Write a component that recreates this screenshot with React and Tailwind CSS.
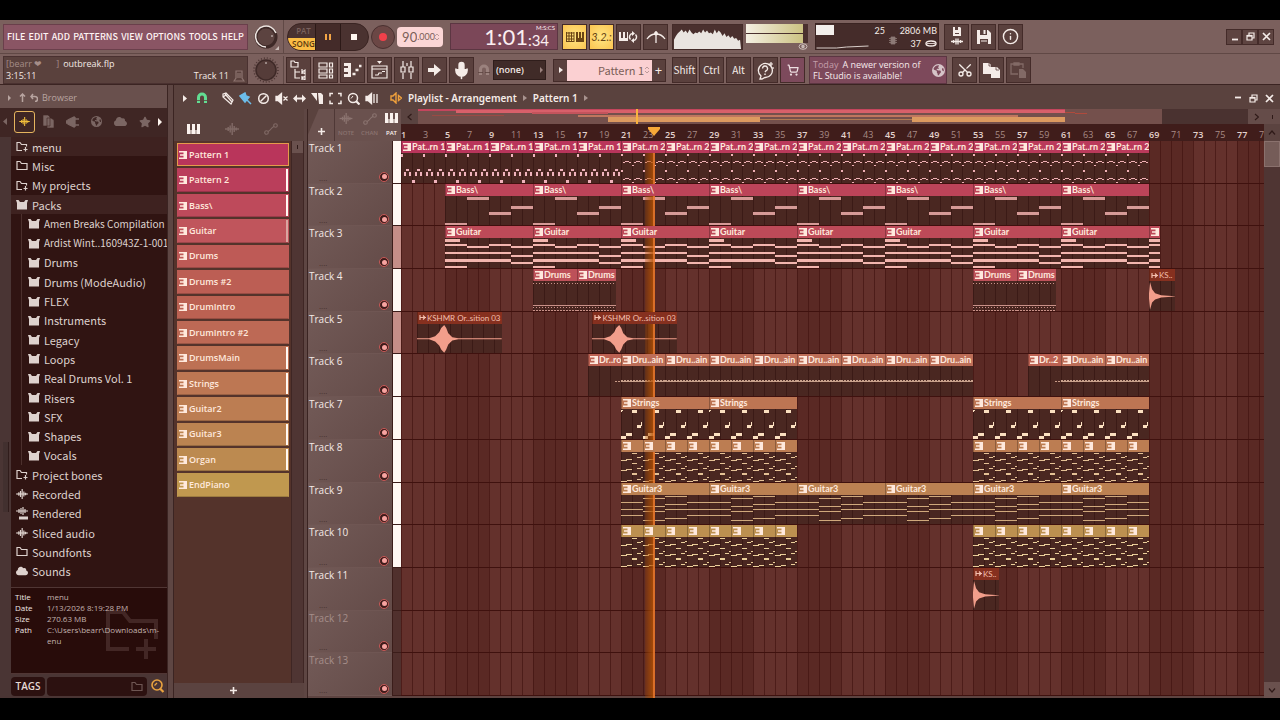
import { useState } from "react";
import clsx from "clsx";
import { Scissors, Info, ShoppingCart, Mic } from "lucide-react";
import { FaEarthAmericas, FaCloud, FaStar } from "react-icons/fa6";

const BAR = 11;
const HEADER = 93;
const PLAYHEAD = 22.9;

const menus = ["FILE", "EDIT", "ADD", "PATTERNS", "VIEW", "OPTIONS", "TOOLS", "HELP"];

const patterns = [
  { name: "Pattern 1", bg: "bg-[#b9355b]" },
  { name: "Pattern 2", bg: "bg-[#ba3e5b]", on: true },
  { name: "Bass\\", bg: "bg-[#be4a5b]", on: true },
  { name: "Guitar", bg: "bg-[#c0555c]", half: true },
  { name: "Drums", bg: "bg-[#be5a56]" },
  { name: "Drums #2", bg: "bg-[#bc5e54]" },
  { name: "DrumIntro", bg: "bg-[#bb6152]" },
  { name: "DrumIntro #2", bg: "bg-[#bd6955]" },
  { name: "DrumsMain", bg: "bg-[#bd7154]", on: true },
  { name: "Strings", bg: "bg-[#bd7753]", on: true },
  { name: "Guitar2", bg: "bg-[#bc7d52]", on: true },
  { name: "Guitar3", bg: "bg-[#bb8351]", on: true },
  { name: "Organ", bg: "bg-[#bc8a50]", on: true },
  { name: "EndPiano", bg: "bg-[#c0984f]" },
];

const browserItems = [
  { name: "menu", icon: "folderPlus", lit: true },
  { name: "Misc", icon: "folder" },
  { name: "My projects", icon: "folderPlus" },
  { name: "Packs", icon: "pack", lit: true },
  { name: "Amen Breaks Compilation", icon: "pack", child: true, long: true },
  { name: "Ardist Wint..160943Z-1-001", icon: "pack", child: true, long: true },
  { name: "Drums", icon: "pack", child: true },
  { name: "Drums (ModeAudio)", icon: "pack", child: true },
  { name: "FLEX", icon: "pack", child: true },
  { name: "Instruments", icon: "pack", child: true },
  { name: "Legacy", icon: "pack", child: true },
  { name: "Loops", icon: "pack", child: true },
  { name: "Real Drums Vol. 1", icon: "pack", child: true },
  { name: "Risers", icon: "pack", child: true },
  { name: "SFX", icon: "pack", child: true },
  { name: "Shapes", icon: "pack", child: true },
  { name: "Vocals", icon: "pack", child: true },
  { name: "Project bones", icon: "folderPlus" },
  { name: "Recorded", icon: "wave" },
  { name: "Rendered", icon: "waveBar" },
  { name: "Sliced audio", icon: "wave" },
  { name: "Soundfonts", icon: "folder" },
  { name: "Sounds", icon: "cloud" },
];

// Note shapes are [x, y, width, height] in a clip body that is 29 units high
const repeat = (notes, step, times) =>
  Array.from({ length: times }, (_, i) => notes.map(([x, y, w, h]) => [x + i * step, y, w, h])).flat();

const chordShort = [
  [0, 8, 6, 1], [5, 7, 6, 1], [11, 1, 5, 1], [16, 5, 4, 1], [20, 4, 2, 1],
  [0, 18, 6, 1], [5, 17, 6, 1], [11, 11, 5, 1], [16, 16, 4, 1], [20, 14, 2, 1],
  [0, 28, 6, 1], [6, 27, 5, 1], [11, 21, 5, 1], [16, 26, 4, 1], [20, 24, 2, 1],
];

const seg = (x, ys) => ys.map((y) => [x, y, 22, 1]);

const kinds = {
  p1: {
    head: "bg-[#b9355b]",
    fill: "#f0b3bc",
    notes: [
      ...repeat([[0, 1, 2, 3], [11, 26, 3, 3]], 22, 2),
      ...repeat([[3, 19, 2, 3], [5, 16, 3, 2], [8, 19, 2, 3]], 11, 4),
    ],
  },
  p2: {
    head: "bg-[#ba3a5b]",
    fill: "#efb0b4",
    notes: [
      ...repeat([[0, 1, 2, 2], [11, 12, 2, 1], [0, 17, 2, 2], [11, 28, 2, 1]], 22, 2),
      ...repeat([[2, 9, 2, 1], [4, 8, 4, 1], [8, 9, 2, 1], [2, 25, 2, 1], [4, 24, 4, 1], [8, 25, 2, 1]], 11, 4),
    ],
  },
  bass: {
    head: "bg-[#bc4459]",
    fill: "#d69a97",
    notes: [[0, 26, 22, 3], [22, 1, 22, 3], [44, 16, 22, 3], [66, 10, 22, 3]],
  },
  guitar: {
    head: "bg-[#bd4a58]",
    fill: "#f2b5ae",
    notes: [
      [0, 1, 15, 3], [0, 6, 22, 2], [22, 8, 22, 2], [44, 6, 22, 2], [66, 8, 22, 2],
      [0, 14, 66, 2], [66, 17, 22, 2], [0, 21, 66, 2], [66, 23, 22, 2], [0, 27, 22, 2],
    ],
  },
  drums: {
    head: "bg-[#bd5159]",
    fill: "#c99088",
    notes: [...repeat([[0, 2, 1, 1], [0, 25, 1, 1], [0, 28, 2, 1]], 3, 15), [0, 23, 44, 1]],
  },
  intro: { head: "bg-[#bb6152]", fill: "#c79a86", notes: repeat([[27, 15, 2, 1]], 3, 2) },
  main: { head: "bg-[#bd6e58]", fill: "#c9a18c", notes: [...repeat([[0, 14, 2, 1]], 3, 15), [0, 15, 44, 1]] },
  strings: {
    head: "bg-[#bd7553]",
    fill: "#fbe0c0",
    notes: [
      ...repeat([[0, 26, 5, 3], [5, 23, 6, 3], [11, 1, 5, 3], [16, 16, 4, 3], [20, 13, 1, 4]], 22, 4),
      [0, 1, 2, 1], [0, 2, 1, 1],
    ],
  },
  guitar2: { head: "bg-[#bc7d52]", fill: "#e5c296", notes: chordShort },
  guitar3: {
    head: "bg-[#bb8152]",
    fill: "#d0a97c",
    notes: [...seg(0, [7, 14, 20, 28]), ...seg(22, [3, 11, 16, 24]), ...seg(44, [1, 9, 14, 22]), ...seg(66, [7, 14, 20, 28])],
  },
  organ: { head: "bg-[#bc9050]", fill: "#ebcf9a", notes: chordShort },
};

const run = (kind, label, from, to, step) => {
  const out = [];
  for (let at = from; at < to; at += step) out.push({ kind, label, at, len: step });
  return out;
};

const tracks = [
  { strip: "bg-[#fff8f3]", clips: [...run("p1", "Pat..rn 1", 0, 20, 4), ...run("p2", "Pat..rn 2", 20, 68, 4)] },
  { strip: "bg-[#fff8f3]", clips: run("bass", "Bass\\", 4, 68, 8) },
  { strip: "bg-[#c58e88]", clips: [...run("guitar", "Guitar", 4, 68, 8), { kind: "guitar", label: "", at: 68, len: 1 }] },
  {
    strip: "bg-[#fff8f3]",
    clips: [
      { kind: "drums", label: "Drums", at: 12, len: 4 },
      { kind: "drums", label: "Drums", at: 16, len: 3.5 },
      { kind: "drums", label: "Drums", at: 52, len: 4 },
      { kind: "drums", label: "Drums", at: 56, len: 3.5 },
      { audio: "hit", label: "KS..", at: 68, len: 2.4 },
    ],
  },
  {
    strip: "bg-[#c58e88]",
    clips: [
      { audio: "swell", label: "KSHMR Or..sition 03", at: 1.45, len: 7.7 },
      { audio: "swell", label: "KSHMR Or..sition 03", at: 17.4, len: 7.7 },
    ],
  },
  {
    strip: "bg-[#fff8f3]",
    clips: [
      { kind: "intro", label: "Dr..ro", at: 17, len: 3 },
      ...run("main", "Dru..ain", 20, 52, 4),
      { kind: "intro", label: "Dr..2", at: 57, len: 3 },
      ...run("main", "Dru..ain", 60, 68, 4),
    ],
  },
  { strip: "bg-[#fff8f3]", clips: [...run("strings", "Strings", 20, 36, 8), ...run("strings", "Strings", 52, 68, 8)] },
  { strip: "bg-[#fff8f3]", clips: [...run("guitar2", "", 20, 36, 2), ...run("guitar2", "", 52, 68, 2)] },
  { strip: "bg-[#fff8f3]", clips: run("guitar3", "Guitar3", 20, 68, 8) },
  { strip: "bg-[#fff8f3]", clips: [...run("organ", "", 20, 36, 2), ...run("organ", "", 52, 68, 2)] },
  { strip: "bg-[#50302d]", clips: [{ audio: "hit", label: "KS..", at: 52, len: 2.4 }] },
  { strip: "bg-[#50302d]", clips: [], dim: true },
  { strip: "bg-[#50302d]", clips: [], dim: true },
];

/* ---------- icons ---------- */

function Ico({ w = 16, h = 16, vb, className, children }) {
  return (
    <svg width={w} height={h} viewBox={vb || `0 0 ${w} ${h}`} fill="none" stroke="currentColor" strokeWidth="1.5" className={clsx("shrink-0", className)} aria-hidden="true">
      {children}
    </svg>
  );
}

const PatternGlyph = ({ className }) => (
  <Ico w={8} h={8} className={className}>
    <path d="M0 0h8v8H0V6.500h4.500V4.700H1V3.300h3.500V1.500H0z" fill="currentColor" stroke="none" />
  </Ico>
);

const WaveIcon = ({ w = 14, h = 12 }) => (
  <Ico w={w} h={h} vb="0 0 14 12">
    <path d="M0 6h14" strokeWidth="1.4" />
    <path d="M3.2 4v4M5.2 2.5v7M7.2 0v12M9.2 3v6M11.2 4.5v3" strokeWidth="1.4" />
  </Ico>
);

const PianoIcon = ({ w = 13, h = 10 }) => (
  <Ico w={w} h={h} vb="0 0 13 10">
    <path d="M0 0h3v6h2V0h3v6h2V0h3v10H0z" fill="currentColor" stroke="none" />
    <path d="M4 6v4M9 6v4" stroke="#5a423e" strokeWidth="0.7" />
  </Ico>
);

const AutoIcon = () => (
  <Ico w={14} h={12}>
    <circle cx="2.5" cy="9.5" r="1.8" strokeWidth="1.1" />
    <circle cx="11.5" cy="2.5" r="1.8" strokeWidth="1.1" />
    <path d="M4 8.5C7 7.500 7 4.500 10 3.500" strokeWidth="1.1" />
  </Ico>
);

const FolderIcon = ({ plus }) => (
  <Ico w={12} h={11}>
    <path d={plus ? "M6 9.500H1V1.500h3l1.500 2H10.500V5.500" : "M1 9.500V1.500h3l1.500 2H11v6z"} strokeWidth="1.2" />
    {plus && <path d="M9.500 6v4.500M7.500 8.500h4" strokeWidth="1.2" />}
  </Ico>
);

const PackIcon = () => (
  <Ico w={12} h={11}>
    <path d="M0 1h2.500L4 3h4l1.500-2H12l-1 3v6.500H1V4z" fill="currentColor" stroke="none" />
  </Ico>
);

const browserIcons = {
  folder: <FolderIcon />,
  folderPlus: <FolderIcon plus />,
  pack: <PackIcon />,
  wave: <WaveIcon w={12} h={10} />,
  waveBar: (
    <Ico w={12} h={13}>
      <path d="M0 4h12M3 2v4M5 1v6M7 0v8M9 2v4" strokeWidth="1.2" />
      <path d="M3 9.500h9v3H3z" fill="currentColor" stroke="none" />
    </Ico>
  ),
  cloud: <FaCloud size={12} className="shrink-0" />,
};

const MagnetIcon = ({ w = 12, h = 12 }) => (
  <Ico w={w} h={h} vb="0 0 12 12">
    <path d="M2.500 11V5.500a3.500 3.500 0 0 1 7 0V11" strokeWidth="3" />
    <path d="M0 8.500h5M7 8.500h5" stroke="#5a423e" strokeWidth="0.8" />
  </Ico>
);

const RestoreIcon = () => (
  <Ico w={9} h={9}>
    <path d="M1 3.500h5v4.500H1zM3 3V1h5v5H6.500" strokeWidth="1.2" />
    <path d="M1 3.800h5" strokeWidth="1.8" />
  </Ico>
);

const CloseIcon = () => (
  <Ico w={9} h={9}>
    <path d="M1 1l7 7M8 1L1 8" strokeWidth="1.7" />
  </Ico>
);

const SaveShape = () => (
  <>
    <path d="M1 1h11l3 3v11H1z" fill="currentColor" stroke="none" />
    <path d="M4 1h7v5H4zM4 10h8v5H4z" fill="#5a403d" stroke="none" />
    <path d="M7.500 1h2v4h-2zM5 11.500h6v1H5z" fill="currentColor" stroke="none" />
  </>
);

/* ---------- toolbar ---------- */

function Btn({ label, className, children }) {
  return (
    <button
      type="button"
      aria-label={label}
      className={clsx(
        "flex h-[26px] w-[25px] shrink-0 items-center justify-center border border-[#442b29]",
        className || "bg-[#5a403d] text-[#f5ece8]"
      )}
    >
      {children}
    </button>
  );
}

function WindowButtons({ boxed }) {
  const cls = boxed
    ? "flex h-4 w-4 items-center justify-center border border-[#442b29] bg-[#5e4441]"
    : "flex h-4 w-4 items-center justify-center";
  return (
    <div className="ml-auto flex shrink-0 text-[#f5ece8]">
      <button type="button" aria-label="Minimize" className={cls}>
        <Ico w={7} h={9}><path d={boxed ? "M1 7.500h6" : "M1 3.500h6"} strokeWidth="1.8" /></Ico>
      </button>
      <button type="button" aria-label="Restore" className={cls}><RestoreIcon /></button>
      <button type="button" aria-label="Close" className={cls}><CloseIcon /></button>
    </div>
  );
}

function Knob({ ring }) {
  return (
    <div className="flex h-full w-9 shrink-0 items-center justify-center border-r border-[#604845]">
      <Ico w={28} h={28}>
        {ring ? (
          <>
            <circle cx="14" cy="14" r="10" fill="#5c4340" stroke="#3e2927" strokeWidth="3" />
            <path d="M14 24A10.500 10.500 0 1 1 24 10" stroke="#efe6e2" strokeWidth="1.500" />
            <circle cx="20" cy="13" r="0.800" fill="#efe6e2" stroke="none" />
            <path d="M27 23v4h-4z" fill="#c9bab6" stroke="none" />
          </>
        ) : (
          <>
            <circle cx="14" cy="14" r="12" stroke="#4a3331" strokeWidth="1.500" strokeDasharray="1 2" />
            <circle cx="14" cy="14" r="10" fill="#553c39" stroke="#3e2927" strokeWidth="1.500" />
            <circle cx="14" cy="7" r="0.800" fill="#efe6e2" stroke="none" />
          </>
        )}
      </Ico>
    </div>
  );
}

function Transport() {
  return (
    <div className="flex h-[28px] w-[82px] shrink-0 overflow-hidden rounded-full border border-[#3a2422] bg-[#4a3230]">
      <div className="flex w-[27px] flex-col text-center font-['Open_Sans',sans-serif] text-[8px] font-semibold leading-[12px]">
        <button type="button" className="h-[14px] pl-1 text-[#7b625e]">PAT</button>
        <button type="button" className="h-[12px] bg-[#fbbd45] pl-1 text-[#5a3a10]">SONG</button>
      </div>
      <button type="button" aria-label="Pause" className="flex w-[26px] items-center justify-center border-x border-[#2c1917] bg-[#442b29] text-[#f3a546]">
        <Ico w={8} h={8}><path d="M2 1v6M6 1v6" strokeWidth="2" /></Ico>
      </button>
      <button type="button" aria-label="Stop" className="flex w-[26px] items-center justify-center">
        <span className="h-[6px] w-[6px] bg-[#fff6f0]" />
      </button>
    </div>
  );
}

function Scope() {
  const pts = [16, 12, 9, 7, 5, 8, 6, 9, 5, 8, 10, 8, 9, 7, 9, 5, 8, 6, 9, 8, 10, 5, 9, 6, 8, 12, 9, 13, 11, 14, 12, 15, 14, 17, 16];
  const line = pts.map((y, i) => `${i * 2 + 1},${y}`).join(" ");
  return (
    <svg viewBox="0 0 71 26" preserveAspectRatio="none" className="h-[26px] w-[71px] shrink-0 border border-[#442b29] bg-[#4a302e]" aria-hidden="true">
      <polygon points={`1,26 ${line} 70,26`} fill="#e9e4e0" />
    </svg>
  );
}

function ToolbarTop() {
  return (
    <div className="flex h-[34px] items-center border-b border-[#604845] pl-[3px] pr-[6px]">
      <nav className="flex h-[26px] w-[245px] shrink-0 items-center justify-between border border-[#6a3f4b] bg-[#8a5564] px-[3px] font-['Noto_Sans_CJK_JP',sans-serif] text-[9px] font-medium leading-4 text-[#fff4f4]">
        {menus.map((m) => (
          <button type="button" key={m}>{m}</button>
        ))}
      </nav>
      <Knob ring />
      <div className="flex min-w-0 flex-1 items-center pl-[3px]">
        <Transport />
        <button type="button" aria-label="Record" className="ml-[2px] flex h-6 w-6 shrink-0 items-center justify-center rounded-full border border-[#4a3130] bg-[#6b4745]">
          <span className="h-2 w-2 rounded-full bg-[#f0404a]" />
        </button>
        <label className="ml-[2px] flex h-5 w-[46px] shrink-0 items-center rounded-sm bg-[#fbd6d6] pr-1 font-['Lato',sans-serif] text-[#7c5e58]">
          <input aria-label="Tempo" defaultValue="90" className="h-4 min-w-0 flex-1 bg-transparent text-right text-[13px] leading-4" />
          <span className="text-[9px] leading-4">.000</span>
          <Ico w={4} h={10} className="text-[#b99]"><path d="M0 4l2-2 2 2M0 6l2 2 2-2" strokeWidth="1" /></Ico>
        </label>
        <div className="ml-[7px] flex h-[27px] w-[108px] shrink-0 items-center justify-end border border-[#5c3642] bg-[#7b4758] pr-[2px] font-['Lato',sans-serif] text-[#fbeef0]">
          <span className="text-[22px] leading-6">1:01</span>
          <div className="flex flex-col">
            <span className="pl-2 text-[6px] leading-[7px]">M:S:CS</span>
            <span className="text-[15px] leading-[18px]">:34</span>
          </div>
        </div>
        <div className="ml-1 flex gap-[2px]">
          <Btn label="Typing keyboard" className="bg-[radial-gradient(#ffe684,#fbc450)] text-[#6a4414]">
            <Ico w={20} h={12}>
              <path d="M1 2h8M1 5h8M1 8h8M1 10.500h8M1.500 1v10M4 1v10M6.500 1v10M9 1v10" strokeWidth="1" />
              <path d="M11 1h2v6h1V1h2v6h1V1h2v10h-8z" fill="currentColor" stroke="none" />
            </Ico>
          </Btn>
          <Btn label="Countdown" className="bg-[radial-gradient(#ffe684,#fbc450)] text-[#6a4414]">
            <span className="font-['Lato',sans-serif] text-[11px] italic leading-3">3.2.:</span>
          </Btn>
          <Btn label="Loop record">
            <Ico w={19} h={12}>
              <path d="M0 1h2v6h2V1h2v6h2V1h1v9H0z" fill="currentColor" stroke="none" />
              <path d="M11.500 8.500A3.500 3.500 0 0 1 13.500 2.500M16.500 3.500A3.500 3.500 0 0 1 14.500 9.500" strokeWidth="1.500" />
              <path d="M13 0l3 2.500-3 2.500zM15 7v5l-3-2.500z" fill="currentColor" stroke="none" />
            </Ico>
          </Btn>
          <Btn label="Metronome">
            <Ico w={20} h={14}>
              <path d="M1 9C3 6 6 4 10 4s7 2 9 5M10 1v12" strokeWidth="1.300" />
              <circle cx="10" cy="3.500" r="2" fill="currentColor" stroke="none" />
            </Ico>
          </Btn>
        </div>
        <div className="ml-1 flex shrink-0 gap-[3px]">
          <Scope />
          <div className="flex w-[62px] flex-col">
            <div className="flex h-[19px] flex-col gap-px bg-[#4a302e] pr-[5px]">
              <span className="flex-1 bg-[linear-gradient(90deg,#f4efe2,#ccc282)]" />
              <span className="flex-1 bg-[linear-gradient(90deg,#f4efe2,#ccc282)]" />
            </div>
            <Ico w={10} h={7} className="ml-auto text-[#cbbdb9]"><ellipse cx="5" cy="3.500" rx="4" ry="2.800" strokeWidth="1" /><circle cx="5" cy="3.500" r="1" /></Ico>
          </div>
        </div>
        <div className="ml-[7px] flex h-[27px] w-[124px] shrink-0 border border-[#3b2422] bg-[#452c2a] font-['Lato',sans-serif] text-[9px] leading-[13px] text-[#f5ece8]">
          <div className="flex w-[53px] flex-col justify-between">
            <span className="mt-px h-[10px] w-[18px] bg-[#f3efec]" />
            <svg viewBox="0 0 52 5" className="h-[5px] w-full" aria-hidden="true"><path d="M0 4h20l10-1 22-1" stroke="#d8cdc9" fill="none" /></svg>
          </div>
          <div className="flex w-[16px] justify-end">25</div>
          <Ico w={8} h={9} className="ml-1 mt-3 text-[#8d7a76]"><path d="M2 1h4v7H2zM0 2.500h8M0 4.500h8M0 6.500h8" fill="currentColor" strokeWidth="0.800" /></Ico>
          <div className="flex flex-1 flex-col items-end whitespace-nowrap pr-px">
            <span>2806 MB</span>
            <span className="flex items-center gap-1">37 <Ico w={12} h={7}><ellipse cx="6" cy="3.500" rx="5" ry="2.500" strokeWidth="1.400" /><path d="M2 3.500h8" strokeWidth="0.800" /></Ico></span>
          </div>
        </div>
        <div className="ml-[5px] flex gap-[2px]">
          <Btn label="Save new version">
            <Ico w={12} h={19}>
              <path d="M2 0h7l1 1v8H2z" fill="currentColor" stroke="none" />
              <path d="M4 0h3v3H4zM4 6h4v1H4z" fill="#5a403d" stroke="none" />
              <path d="M0 14.500h12M2.500 13v3M5 11.500v6M7 11.500v6M9.500 13v3" strokeWidth="1.300" />
            </Ico>
          </Btn>
          <Btn label="Save"><Ico w={16} h={16}><SaveShape /></Ico></Btn>
          <Btn label="Info"><Info size={17} /></Btn>
        </div>
        <WindowButtons boxed />
      </div>
    </div>
  );
}

function ToolbarBottom() {
  return (
    <div className="flex h-[30px] items-center pl-[3px] pr-[6px] pt-[2px]">
      <div className="flex h-[28px] w-[245px] shrink-0 flex-col justify-center border border-[#4a3130] bg-[#5a413d] px-[2px] font-['Open_Sans',sans-serif] text-[9px] leading-3 text-[#f3e9e5]">
        <div className="flex gap-1">
          <span className="whitespace-pre text-[#a58d88]">[bearr ❤      ]</span>
          <span>outbreak.flp</span>
        </div>
        <div className="flex items-center">
          <span>3:15:11</span>
          <span className="ml-auto">Track 11</span>
          <Ico w={12} h={12} className="ml-1 text-[#8d7470]"><path d="M3 1h6v7l2 3H1l2-3zM5 3v5M7 3v5" strokeWidth="1.200" /></Ico>
        </div>
      </div>
      <Knob />
      <div className="flex min-w-0 flex-1 items-center pl-[2px]">
        <div className="flex gap-[2px]">
          <Btn label="Browser">
            <Ico w={18} h={20}>
              <path d="M1 7V1h3l1 1.500h3V7z" strokeWidth="1.200" />
              <path d="M5 9v9h5M5 12h5M12 9v5M12 16v4M12 12l3-2v4zM12 18l3-2v4z" strokeWidth="1.200" />
            </Ico>
          </Btn>
          <Btn label="Channel rack">
            <Ico w={16} h={17}><path d="M1 1h8v4H1zM1 7h8v4H1zM1 13h8v3H1zM11.500 1h3v4h-3zM11.500 7h3v4h-3zM11.500 13h3v3h-3z" strokeWidth="1.200" /></Ico>
          </Btn>
          <Btn label="Piano roll">
            <Ico w={19} h={14}>
              <path d="M1 0h7v14H1v-3h4V9H1V5h4V3H1z" fill="currentColor" stroke="none" />
              <path d="M9.500 11h3M12.500 7h3M16 3h2.500" strokeWidth="2.400" />
            </Ico>
          </Btn>
          <Btn label="Playlist">
            <Ico w={17} h={18}>
              <path d="M6 0h5L8.500 3z" fill="currentColor" stroke="none" />
              <path d="M1 5h15v12H1zM1 8h15M4 14h3l1-2h3M11 10.500h3" strokeWidth="1.200" />
            </Ico>
          </Btn>
          <Btn label="Mixer">
            <Ico w={14} h={18}><path d="M3 0v6M3 12v6M11 0v6M11 12v6M1 6h4v5H1zM9 6h4v5H9zM7 2v3" strokeWidth="1.200" /></Ico>
          </Btn>
        </div>
        <div className="ml-[3px] flex gap-[2px]">
          <Btn label="Step"><Ico w={13} h={12}><path d="M0 4h6V0l7 6-7 6V8H0z" fill="currentColor" stroke="none" /></Ico></Btn>
          <Btn label="Tempo tapper"><Mic size={19} fill="currentColor" strokeWidth={2} /></Btn>
        </div>
        <span className="ml-1 text-[#9b827e]"><MagnetIcon /></span>
        <div className="ml-[3px] flex h-5 w-[53px] shrink-0 items-center border border-[#2f1d1b] bg-[#402b28] pr-[2px] text-[#f3e9e5]">
          <select aria-label="Snap" className="min-w-0 flex-1 appearance-none bg-transparent pl-[2px] font-['Open_Sans',sans-serif] text-[9px] font-semibold">
            <option>(none)</option>
          </select>
          <Ico w={3} h={6} className="text-[#9b827e]"><path d="M0 0l3 3-3 3z" fill="currentColor" stroke="none" /></Ico>
        </div>
        <div className="ml-[7px] flex h-[23px] w-[113px] shrink-0 border border-[#442b29] bg-[#5a403d] text-[#f5ece8]">
          <button type="button" aria-label="Pattern menu" className="flex w-[13px] items-center justify-center"><Ico w={4} h={6}><path d="M0 0l4 3-4 3z" fill="currentColor" stroke="none" /></Ico></button>
          <input aria-label="Pattern" defaultValue="Pattern 1" className="h-full w-[77px] min-w-0 bg-[#fbd0d2] text-right font-['Noto_Sans_CJK_JP',sans-serif] text-[11px] leading-4 text-[#7c5e58]" />
          <span className="flex w-2 items-center bg-[#fbd0d2] text-[#b99]"><Ico w={6} h={10}><path d="M1 4l2-2 2 2M1 6l2 2 2-2" strokeWidth="1" /></Ico></span>
          <button type="button" className="flex flex-1 items-center justify-center text-[13px] leading-4">+</button>
        </div>
        <div className="ml-[6px] flex gap-[2px] font-['Noto_Sans_CJK_JP',sans-serif] text-[10px] leading-4">
          <Btn>Shift</Btn>
          <Btn>Ctrl</Btn>
          <Btn>Alt</Btn>
          <Btn label="Help">
            <Ico w={19} h={19}>
              <path d="M4 18l1-3A7 7 0 1 1 9 16.500L6 18z" strokeWidth="1.300" />
              <path d="M6.500 7.500a2.500 2.500 0 1 1 3.500 2.300L9 11M9 12.500v1.500" strokeWidth="1.400" />
              <path d="M15 1v4M13 3h4M17 6v2" strokeWidth="1.200" />
            </Ico>
          </Btn>
          <Btn label="Shop" className="bg-[#7d4a5c] text-[#eedfe2]"><ShoppingCart size={12} strokeWidth={2.5} /></Btn>
        </div>
        <div className="ml-1 flex h-[28px] w-[138px] shrink-0 items-center border border-[#5c3642] bg-[#7d495b] pl-[3px] pr-px font-['Open_Sans',sans-serif] text-[9px] leading-[11px] text-[#f7e9ec]">
          <p className="flex-1"><span className="mr-1 text-[#c39ea9]">Today</span>A newer version of<br />FL Studio is available!</p>
          <FaEarthAmericas size={13} className="shrink-0 text-[#d6c4c8]" />
        </div>
        <div className="ml-[5px] flex gap-[2px]">
          <Btn label="Cut"><Scissors size={16} className="-rotate-90" /></Btn>
          <Btn label="Copy">
            <Ico w={17} h={15}><path d="M0 0h6l2 2v9H0zM8 4h6l3 3v8H8z" fill="currentColor" stroke="none" /><path d="M6 0v3h3M13 4v3h3" stroke="#5a403d" strokeWidth="0.800" /></Ico>
          </Btn>
          <Btn label="Paste" className="bg-[#5a403d] text-[#826a66]">
            <Ico w={17} h={16}><path d="M8 12H1V2h12v4M4 1h5v2H4z" strokeWidth="1.300" /><path d="M9 7h4l3 3v6H9z" fill="currentColor" stroke="none" /></Ico>
          </Btn>
        </div>
      </div>
    </div>
  );
}

/* ---------- browser ---------- */

function Browser() {
  return (
    <aside className="flex w-[167px] shrink-0 flex-col bg-[#4a3534]">
      <div className="flex h-[23px] shrink-0 items-center gap-2 bg-[#69504d] pl-2 pt-[2px] font-['Open_Sans',sans-serif] text-[9px] text-[#b8a4a0]">
        <Ico w={3} h={6}><path d="M0 0l3 3-3 3z" fill="currentColor" stroke="none" /></Ico>
        <Ico w={7} h={9}><path d="M3.500 9V1M1 3.500L3.500 1 6 3.500" /></Ico>
        <Ico w={8} h={9} className="-ml-1"><path d="M3 1L1 3.500 3 6M1 3.500h4a2 2 0 0 1 0 5" /></Ico>
        <span className="-ml-1">Browser</span>
      </div>
      <div className="flex h-[29px] shrink-0 items-center bg-[#3f2624] pb-[2px] text-[#7b6663]">
        <Ico w={12} h={7}><path d="M7 0v7L3 3.500z" fill="currentColor" stroke="none" /></Ico>
        <button type="button" aria-label="Audio" className="ml-[2px] flex h-[22px] w-[21px] items-center justify-center rounded-[3px] border border-[#e5b45e] text-[#f2bf3c]"><WaveIcon w={13} h={9} /></button>
        <div className="flex flex-1 items-center justify-between pl-2 pr-[6px]">
          <button type="button" aria-label="Files"><Ico w={11} h={13}><path d="M0 0h5l2 2v9H0z M4 3h4l3 2v8H4z" fill="currentColor" stroke="#3f2624" strokeWidth="0.600" /></Ico></button>
          <button type="button" aria-label="Plugins"><Ico w={13} h={12}><path d="M0 5h2V4l6-3v10L2 8V7H0zM9 3h4M9 9h4M9 1v10" fill="currentColor" strokeWidth="1.300" /></Ico></button>
          <button type="button" aria-label="Online"><FaEarthAmericas size={11} /></button>
          <button type="button" aria-label="Cloud"><FaCloud size={13} /></button>
          <button type="button" aria-label="Favourites"><FaStar size={12} /></button>
        </div>
        <Ico w={8} h={8} className="mr-[2px] text-[#fff6f0]"><path d="M1 0l4 4-4 4z" fill="currentColor" stroke="none" /></Ico>
      </div>
      <div className="flex min-h-0 flex-1">
        <div className="flex w-[11px] shrink-0 flex-col items-center">
          <div className="flex-1" />
          <div className="mb-[186px] h-[70px] w-[6px] border-r border-[#301c1b] bg-[#42302f]" />
        </div>
        <div className="flex min-w-0 flex-1 flex-col">
          <ul className="flex min-h-0 flex-1 flex-col overflow-hidden bg-[#301412] pb-[6px]">
            {browserItems.map((it) => (
              <li key={it.name} className={clsx("flex min-h-0 flex-1", it.lit && "bg-[#3e2220]")}>
                <button
                  type="button"
                  className={clsx(
                    "flex min-w-0 flex-1 items-center gap-1 whitespace-nowrap font-['Noto_Sans_CJK_JP',sans-serif] leading-4 text-[#ded2ce]",
                    it.long ? "text-[10px]" : "text-[11px]",
                    it.child ? "ml-[10px] border-l border-[#4c302d] pl-[6px]" : "pl-[5px]"
                  )}
                >
                  {browserIcons[it.icon]}
                  <span>{it.name}</span>
                </button>
              </li>
            ))}
          </ul>
          <div className="relative h-[87px] shrink-0 border-y border-[#503634] bg-[#280c0a] px-1 pt-[3px]">
            <div className="absolute bottom-3 right-2 text-[#432725]">
              <Ico w={54} h={52} vb="0 0 54 52"><path d="M24 40H3V3h15l7 9h26v18" strokeWidth="4" /><path d="M41 30v20M31 40h20" strokeWidth="4" /></Ico>
            </div>
            <dl className="relative grid grid-cols-[32px_1fr] font-['Open_Sans',sans-serif] text-[8px] leading-[11px] text-[#c2b2ae]">
              <dt className="text-[#f0e6e2]">Title</dt><dd>menu</dd>
              <dt className="text-[#f0e6e2]">Date</dt><dd>1/13/2026 8:19:28 PM</dd>
              <dt className="text-[#f0e6e2]">Size</dt><dd>270.63 MB</dd>
              <dt className="text-[#f0e6e2]">Path</dt><dd className="whitespace-nowrap">C:\Users\bearr\Downloads\m-<br />enu</dd>
            </dl>
          </div>
          <div className="flex h-6 shrink-0 items-center gap-[2px] text-[#6e5653]">
            <button type="button" className="h-[19px] w-[34px] rounded-sm bg-[#2c1110] font-['Open_Sans',sans-serif] text-[10px] font-semibold text-[#e6dad6]">TAGS</button>
            <label className="flex h-[19px] w-[100px] items-center rounded-sm bg-[#2c1110] pr-1">
              <input aria-label="Search" className="min-w-0 flex-1 bg-transparent text-[10px]" />
              <FolderIcon />
            </label>
            <Ico w={16} h={16} className="text-[#e9a33f]"><circle cx="8" cy="7" r="5" strokeWidth="1.600" /><path d="M11 10.500l3.500 3.500" strokeWidth="2.200" /><path d="M5.500 7.500L8 5" strokeWidth="1.200" /></Ico>
          </div>
        </div>
      </div>
    </aside>
  );
}

/* ---------- playlist ---------- */

const tools = [
  ["Draw", <path key="a" d="M2 2l3-1 7 7-2 4-8-7zM4 2l7 8M2 5l3-2" strokeWidth="1.200" />],
  ["Paint", <path key="a" d="M1 4l5-3 1 3 3 1-4 5zM8 8l4 4" fill="#6cbdea" stroke="#6cbdea" strokeWidth="1.500" />],
  ["Delete", <g key="a"><circle cx="6.500" cy="6.500" r="4.800" /><path d="M3.500 9.500l6-6" /></g>],
  ["Mute", <path key="a" d="M1 4.500h2l3.500-3v10L3 8.500H1zM8.500 4.500l4 4M12.500 4.500l-4 4" fill="currentColor" strokeWidth="1.300" />],
  ["Slip", <path key="a" d="M0 6.500L4 2.500v3h5v-3l4 4-4 4v-3H4v3z" fill="currentColor" stroke="none" />],
  ["Slice", <g key="a"><path d="M0 1h6v8zM7 1h3l2 2v9H8z" fill="currentColor" stroke="none" /></g>],
  ["Select", <path key="a" d="M1 4.500V1.500h3M9 1.500h3v3M12 8.500v3H9M4 11.500H1v-3" />],
  ["Zoom", <g key="a"><circle cx="6" cy="6" r="4.500" /><path d="M9 9l3.500 3.500" strokeWidth="2.200" /><path d="M4 6.500L6 4" strokeWidth="1" /></g>],
  ["Playback", <path key="a" d="M1 4.500h2l3.500-3v10L3 8.500H1zM9 2v9M12 2v9" fill="currentColor" strokeWidth="1.300" />],
];

function Arrow() {
  return <Ico w={4} h={6} className="text-[#a8938f]"><path d="M0 0l4 3-4 3z" fill="currentColor" stroke="none" /></Ico>;
}

function PlaylistTitle() {
  return (
    <div className="flex h-6 shrink-0 items-center bg-[#5a423e] pl-[9px] pr-[3px] pt-[2px] text-[#f5ece8]">
      <Ico w={4} h={7}><path d="M0 0l4 3.500-4 3.500z" fill="currentColor" stroke="none" /></Ico>
      <button type="button" aria-label="Snap to grid" className="ml-[9px] text-[#62dd92]"><MagnetIcon /></button>
      <div className="ml-[10px] flex">
        {tools.map(([name, shape]) => (
          <button type="button" key={name} aria-label={name} className="flex w-[18px] justify-center">
            <Ico w={13} h={13}>{shape}</Ico>
          </button>
        ))}
      </div>
      <Ico w={12} h={12} className="ml-[10px] text-[#f0a03c]"><path d="M1 4h2l3-3v10L3 8H1zM8.500 3.500l3 2.500-3 2.500z" strokeWidth="1.400" /></Ico>
      <h1 className="ml-[6px] flex items-center gap-[6px] font-['Noto_Sans',sans-serif] text-[10px] font-semibold">
        Playlist - Arrangement <Arrow /> Pattern 1 <Arrow />
      </h1>
      <WindowButtons />
    </div>
  );
}

function PatternPicker() {
  const [current, setCurrent] = useState("Pattern 1");
  return (
    <section className="flex w-[130px] shrink-0 flex-col bg-[#54332b]">
      <div className="flex h-8 shrink-0 items-center gap-[25px] bg-[#5a423e] pl-[13px] pt-2 text-[#816a66]">
        <span className="text-[#fbf3ef]"><PianoIcon /></span>
        <WaveIcon />
        <AutoIcon />
      </div>
      <div className="flex min-h-0 flex-1">
        <div className="min-w-0 flex-1 pl-[3px] pr-[2px] pt-[2px]">
          <ul className="flex h-[354px] flex-col gap-[2px]">
            {patterns.map((p) => (
              <li key={p.name} className={clsx("flex min-h-0 flex-1 border", p.bg, current === p.name ? "border-[#e59a4a]" : "border-transparent border-b-[#00000030]")}>
                <button
                  type="button"
                  onClick={() => setCurrent(p.name)}
                  className="flex flex-1 items-center gap-[2px] pl-px text-left font-['Open_Sans',sans-serif] text-[9px] font-semibold leading-3 text-[#ffe9dd]"
                >
                  <PatternGlyph />
                  {p.name}
                </button>
                <span className={clsx("w-[2px]", p.on && "bg-[#fff8f3]", p.half && "bg-[#d9a5a0]")} />
              </li>
            ))}
          </ul>
        </div>
        <div className="w-[13px] shrink-0 border-x border-[#3f2624] bg-[#4f3533]">
          <div className="flex h-[12px] items-center justify-center bg-[#6a514e]"><span className="h-1 w-px bg-[#2f1a18]" /></div>
        </div>
      </div>
      <button type="button" aria-label="Add pattern" className="flex h-[15px] shrink-0 items-center justify-center bg-[#5b4340] pr-3 text-[#f5ece8]">
        <Ico w={7} h={7}><path d="M3.500 0v7M0 3.500h7" strokeWidth="1.600" /></Ico>
      </button>
    </section>
  );
}

function AudioShape({ type }) {
  if (type === "hit") {
    return (
      <svg viewBox="0 0 26 29" preserveAspectRatio="none" className="h-full w-full" aria-hidden="true">
        <path d="M0 12L1 1l2 7 3 4 6 2 14 1-14 1-6 2-3 3-2 7L0 17z" fill="#f29e8b" />
      </svg>
    );
  }
  return (
    <svg viewBox="0 0 84 29" preserveAspectRatio="none" className="h-full w-full" aria-hidden="true">
      <path d="M0 14h12l6-2 4-4 2-4 3-3 2 3 2 5 4 4 6 1h43v1H41l-6 1-4 4-2 5-2 3-3-3-2-4-4-4-6-2H0z" fill="#f29e8b" />
    </svg>
  );
}

function Clip({ clip }) {
  const kind = clip.kind && kinds[clip.kind];
  return (
    <div
      className="absolute inset-y-0 flex flex-col overflow-hidden"
      style={{ left: clip.at * BAR, width: clip.len * BAR }}
    >
      <div
        className={clsx(
          "relative z-10 flex h-3 shrink-0 items-center gap-px overflow-hidden whitespace-nowrap border-l border-[#00000040] pl-px font-['Lato',sans-serif] leading-3",
          kind ? kind.head : "bg-[#86301f]",
          kind ? "text-[9px] font-bold text-[#ffe9dd]" : "text-[8px] text-[#f3bfae]"
        )}
      >
        {kind ? (
          <PatternGlyph />
        ) : (
          <Ico w={7} h={7}><path d="M1 1v5M1 3.500h6M4 1.500l2 2-2 2" strokeWidth="1.200" /></Ico>
        )}
        {clip.label}
      </div>
      <div className="min-h-0 flex-1 bg-[repeating-linear-gradient(90deg,#3b1a16_0_1px,#4a2721_1px_11px)]">
        {kind ? (
          <svg viewBox={`0 0 ${clip.len * BAR} 29`} preserveAspectRatio="none" className="h-full w-full" shapeRendering="crispEdges" aria-hidden="true">
            {kind.notes.map(([x, y, w, h], i) => (
              <rect key={i} x={x} y={y} width={w} height={h} fill={kind.fill} />
            ))}
          </svg>
        ) : (
          <AudioShape type={clip.audio} />
        )}
      </div>
    </div>
  );
}

function Track({ track, index }) {
  return (
    <div className="flex min-h-0 flex-1">
      <div className="flex w-[84px] shrink-0 justify-between border-b border-[#6f5653] bg-[linear-gradient(135deg,#725a57,#644b48)] pl-px pr-[3px] font-['Open_Sans',sans-serif] text-[10px]">
        <div className="flex flex-col justify-between">
          <span className={clsx("leading-[15px]", track.dim ? "text-[#a58e8a]" : "text-[#f5eae6]")}>Track {index + 1}</span>
          <span className="pl-[10px] text-[8px] leading-[10px] text-[#46302d]">....</span>
        </div>
        <button type="button" aria-label={`Arm track ${index + 1}`} className="mb-px flex h-[10px] w-[10px] items-center justify-center self-end rounded-full border border-[#c85a58] bg-[#3f1c1b]">
          <span className="h-[5px] w-[5px] rounded-full bg-[#f7a3a0]" />
        </button>
      </div>
      <div className={clsx("w-[9px] shrink-0 border-b border-l border-[#3b1d1a]", track.strip)} />
      <div className="relative min-w-0 flex-1 border-b border-[#3f110e] bg-[repeating-linear-gradient(90deg,#3f110ea0_0_1px,#00000000_1px_11px),repeating-linear-gradient(90deg,#64312c_0_44px,#5a2924_44px_88px)]">
        {track.clips.map((c, i) => (
          <Clip key={i} clip={c} />
        ))}
      </div>
    </div>
  );
}

function Minimap() {
  return (
    <div className="flex h-[15px] shrink-0 items-stretch bg-[#4a3230]">
      <button type="button" aria-label="Scroll left" className="flex w-[17px] items-center justify-center bg-[#5a4340] text-[#2f1a18]">
        <Ico w={5} h={8}><path d="M4.500 1L1 4l3.500 3" strokeWidth="1.200" /></Ico>
      </button>
      <svg viewBox="0 0 744 15" preserveAspectRatio="none" className="h-full w-[744px] min-w-0" shapeRendering="crispEdges" aria-hidden="true">
        <rect width="744" height="15" fill="#74504c" />
        <rect width="647" height="2" fill="#c4455d" />
        <rect x="38" y="1" width="609" height="3" fill="#d8606a" />
        <rect x="14" y="6" width="72" height="1" fill="#9a4a44" />
        <rect x="114" y="3" width="76" height="2" fill="#c4545c" />
        <rect x="160" y="6" width="440" height="2" fill="#c0765e" />
        <rect x="647" y="3" width="10" height="1" fill="#b04a3c" />
        <rect x="657" y="4" width="12" height="1" fill="#b04a3c" />
        <rect x="190" y="8" width="152" height="5" fill="#dc9a60" />
        <rect x="342" y="10" width="152" height="1" fill="#b07a52" />
        <rect x="494" y="8" width="153" height="5" fill="#dc9a60" />
        <rect x="218" width="2" height="15" fill="#f9b23f" />
      </svg>
      <div className="flex-1" />
      <button type="button" aria-label="Scroll right" className="flex w-4 items-center justify-center bg-[#654c49] text-[#2f1a18]">
        <Ico w={5} h={8}><path d="M1 1l3.500 3L1 7" strokeWidth="1.200" /></Ico>
      </button>
    </div>
  );
}

function Ruler() {
  return (
    <div className="relative flex h-[18px] shrink-0 items-center overflow-hidden bg-[#401d1b] pt-[3px] font-['Open_Sans',sans-serif] text-[9px] leading-3">
      {Array.from({ length: 40 }, (_, i) => i * 2 + 1).map((n) => (
        <span key={n} className={clsx("w-[22px] shrink-0", n % 4 === 1 ? "font-semibold text-[#e3d2cd]" : "text-[#a88c87]")}>{n}</span>
      ))}
      <svg viewBox="0 0 12 9" className="absolute top-[3px] h-[9px] w-3 -translate-x-1/2" style={{ left: PLAYHEAD * BAR + 1 }} aria-hidden="true">
        <path d="M0 0h12v2L6 9 0 2z" fill="#f7a838" />
      </svg>
    </div>
  );
}

function TrackCorner() {
  return (
    <div className="flex w-[93px] shrink-0 text-[#8b7470]">
      <button type="button" aria-label="Add track" className="flex w-[27px] items-end justify-center border-r border-[#4f3836] bg-[#6a514e] pb-[6px] text-[#f5ece8] [clip-path:polygon(40%_0,100%_0,100%_100%,0_100%,0_80%)]">
        <Ico w={7} h={7}><path d="M3.500 0v7M0 3.500h7" strokeWidth="1.600" /></Ico>
      </button>
      <div className="flex flex-1 justify-between bg-[#6a514e] px-[3px] py-1 font-['Open_Sans',sans-serif] text-[6px] font-semibold leading-[7px]">
        <button type="button" className="flex flex-col items-center justify-between"><WaveIcon w={16} h={11} />NOTE</button>
        <button type="button" className="flex flex-col items-center justify-between"><AutoIcon />CHAN</button>
        <button type="button" className="flex flex-col items-center justify-between text-[#fbf3ef]"><PianoIcon />PAT</button>
      </div>
    </div>
  );
}

function Playlist() {
  return (
    <main className="flex min-w-0 flex-1 flex-col border-l border-[#3b2422] bg-[#5a423e]">
      <PlaylistTitle />
      <div className="flex min-h-0 flex-1">
        <PatternPicker />
        <div className="w-1 shrink-0 border-r border-[#3b2422] bg-[#5e4643]" />
        <div className="flex min-w-0 flex-1 flex-col overflow-hidden">
          <div className="flex h-8 shrink-0">
            <TrackCorner />
            <div className="flex min-w-0 flex-1 flex-col">
              <Minimap />
              <Ruler />
            </div>
          </div>
          <div className="relative flex min-h-0 flex-1 flex-col">
            {tracks.map((t, i) => (
              <Track key={i} track={t} index={i} />
            ))}
            <div
              className="pointer-events-none absolute inset-y-0 w-[10px] border-r-2 border-[#e8772ce0] bg-[linear-gradient(90deg,#a8480040,#b45000d0)]"
              style={{ left: HEADER + PLAYHEAD * BAR - 8 }}
            />
            <div className="h-[2px] shrink-0 bg-[#5d4441]" />
          </div>
        </div>
        <div className="flex w-4 shrink-0 flex-col bg-[#4f3533] text-[#2f1a18]">
          <div className="flex h-[15px] items-center justify-center bg-[#654c49]"><span className="h-1 w-px bg-[#2f1a18]" /></div>
          <button type="button" aria-label="Scroll up" className="flex h-[17px] items-center justify-center bg-[#5b4340]"><Ico w={8} h={5}><path d="M1 4.500L4 1l3 3.500" strokeWidth="1.200" /></Ico></button>
          <div className="h-[26px] border border-[#8a716d] bg-[#755c58]" />
          <button type="button" aria-label="Scroll down" className="mt-auto flex h-4 items-center justify-center bg-[#6a514e]"><Ico w={8} h={5}><path d="M1 .500L4 4l3-3.500" strokeWidth="1.200" /></Ico></button>
        </div>
      </div>
    </main>
  );
}

export default function App() {
  return (
    <div className="flex h-screen flex-col overflow-hidden bg-black pb-[22px] pt-5">
      <header className="shrink-0 border-b border-[#3b2422] bg-[#7b605d]">
        <ToolbarTop />
        <ToolbarBottom />
      </header>
      <div className="flex min-h-0 flex-1">
        <Browser />
        <div className="w-[6px] shrink-0 border-l border-[#3b2422] bg-[#5e4643]" />
        <Playlist />
      </div>
    </div>
  );
}
